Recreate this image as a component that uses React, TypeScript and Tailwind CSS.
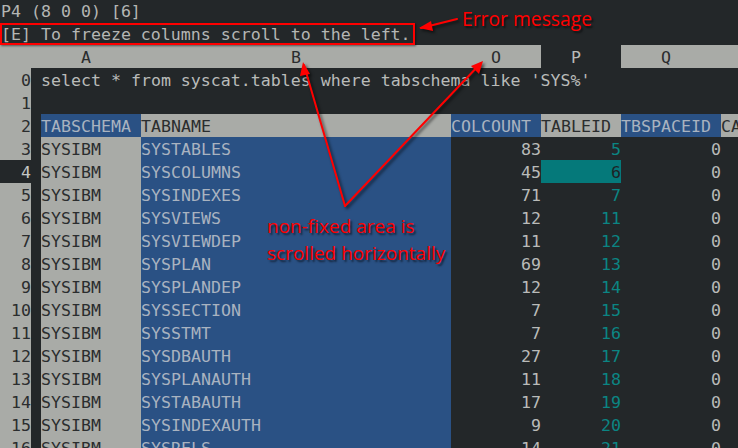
import React from "react";

const rows: [string, number, number][] = [
  ["SYSTABLES", 83, 5],
  ["SYSCOLUMNS", 45, 6],
  ["SYSINDEXES", 71, 7],
  ["SYSVIEWS", 12, 11],
  ["SYSVIEWDEP", 11, 12],
  ["SYSPLAN", 69, 13],
  ["SYSPLANDEP", 12, 14],
  ["SYSSECTION", 7, 15],
  ["SYSSTMT", 7, 16],
  ["SYSDBAUTH", 27, 17],
  ["SYSPLANAUTH", 11, 18],
  ["SYSTABAUTH", 17, 19],
  ["SYSINDEXAUTH", 9, 20],
  ["SYSRELS", 14, 21],
];

const line = "flex h-[23px] leading-[25px] whitespace-pre shrink-0";

function Label({ n, cur }: { n: number; cur?: boolean }) {
  return (
    <>
      <div
        className={
          cur
            ? "w-[31px] shrink-0 text-right bg-[#232729] text-[#c4c6c4]"
            : "w-[31px] shrink-0 text-right bg-[#a9aba7] text-[#2b2d2e]"
        }
      >
        {n}
      </div>
      <div className="w-[10px] shrink-0 bg-[#232729]" />
    </>
  );
}

export default function App() {
  return (
    <div
      className="relative w-[738px] h-[448px] overflow-hidden bg-[#232729] text-[16.6px] text-[#b9bbb9]"
      style={{ fontFamily: '"DejaVu Sans Mono", monospace' }}
    >
      <div className="flex flex-col -mt-px">
        <div className={line + " pl-px text-[#b4b6b4]"}>P4 (8 0 0) [6]</div>
        <div className={line + " pl-px text-[#b4b6b4]"}>[E] To freeze columns scroll to the left.</div>
        {/* column header */}
        <div className={line + " text-[#2b2d2e]"}>
          <div className="w-[41px] shrink-0 bg-[#a9aba7]" />
          <div className="w-[100px] shrink-0 bg-[#a9aba7] pl-[40px]">A</div>
          <div className="w-[310px] shrink-0 bg-[#a9aba7] pl-[150px]">B</div>
          <div className="w-[90px] shrink-0 bg-[#a9aba7] pl-[40px]">O</div>
          <div className="w-[80px] shrink-0 bg-[#232729] pl-[30px] text-[#b9bbb9]">P</div>
          <div className="w-[100px] shrink-0 bg-[#a9aba7] pl-[40px]">Q</div>
          <div className="flex-1 bg-[#a9aba7]" />
        </div>
        {/* row 0 */}
        <div className={line}>
          <Label n={0} />
          <div className="flex-1 text-[#b9bbb9]">select * from syscat.tables where tabschema like 'SYS%'</div>
        </div>
        {/* row 1 */}
        <div className={line}>
          <Label n={1} />
          <div className="flex-1" />
        </div>
        {/* row 2 */}
        <div className={line}>
          <Label n={2} />
          <div className="w-[100px] shrink-0 bg-[#2a5184] text-[#a9b3c0]">TABSCHEMA</div>
          <div className="w-[310px] shrink-0 bg-[#a9aba7] text-[#2b2d2e]">TABNAME</div>
          <div className="w-[90px] shrink-0 bg-[#2a5184] text-[#a9b3c0]">COLCOUNT</div>
          <div className="w-[80px] shrink-0 bg-[#a9aba7] text-[#2b2d2e]">TABLEID</div>
          <div className="w-[100px] shrink-0 bg-[#2a5184] text-[#a9b3c0]">TBSPACEID</div>
          <div className="flex-1 bg-[#a9aba7] text-[#2b2d2e] overflow-hidden">CARD</div>
        </div>
        {rows.map(([name, cc, id], i) => {
          const n = i + 3;
          const cur = n === 4;
          return (
            <div key={n} className={line}>
              <Label n={n} cur={cur} />
              <div className="w-[100px] shrink-0 bg-[#a9aba7] text-[#2b2d2e]">SYSIBM</div>
              <div className="w-[310px] shrink-0 bg-[#2a5184] text-[#a9b3c0]">{name}</div>
              <div className="w-[90px] shrink-0 text-right text-[#b9bbb9]">{cc}</div>
              <div
                className={
                  cur
                    ? "w-[80px] shrink-0 text-right bg-[#05797a] text-[#1e2426]"
                    : "w-[80px] shrink-0 text-right text-[#0b8583]"
                }
              >
                {id}
              </div>
              <div className="w-[100px] shrink-0 text-right text-[#b9bbb9]">0</div>
              <div className="flex-1" />
            </div>
          );
        })}
      </div>

      {/* annotations */}
      <div className="absolute left-0 top-[23px] w-[415px] h-[22px] border-2 border-[#ff0000] [box-shadow:1px_1px_2px_rgba(0,0,0,0.5)]" />
      <svg
        className="absolute left-0 top-0"
        width="738"
        height="448"
        style={{ filter: "drop-shadow(2px 2px 1.5px rgba(0,0,0,0.6))" }}
      >
        <g stroke="#ff0000" strokeWidth="2" fill="none" strokeLinecap="round">
          <line x1="457" y1="19" x2="421" y2="28" />
          <line x1="304" y1="65" x2="345" y2="206" />
          <line x1="345" y1="206" x2="481" y2="63" />
        </g>
        <g fill="#ff0000">
          <polygon points="419,28 431,21 433,31" />
          <polygon points="303,62 300,76 310,74" />
          <polygon points="483,61 471,66 479,74" />
        </g>
      </svg>
      <div
        className="absolute left-[462px] top-[5px] text-[19.3px] leading-[28px] text-[#ff0000] whitespace-nowrap [text-shadow:2px_2px_2px_rgba(0,0,0,0.6)]"
        style={{ fontFamily: '"Open Sans", sans-serif' }}
      >
        Error message
      </div>
      <div
        className="absolute left-[267px] top-[213px] text-[19px] leading-[27px] text-[#ff0000] whitespace-nowrap [text-shadow:2px_2px_2px_rgba(0,0,0,0.6)]"
        style={{ fontFamily: '"Open Sans", sans-serif' }}
      >
        <div>non-fixed area is</div>
        <div>scrolled horizontally</div>
      </div>
    </div>
  );
}
